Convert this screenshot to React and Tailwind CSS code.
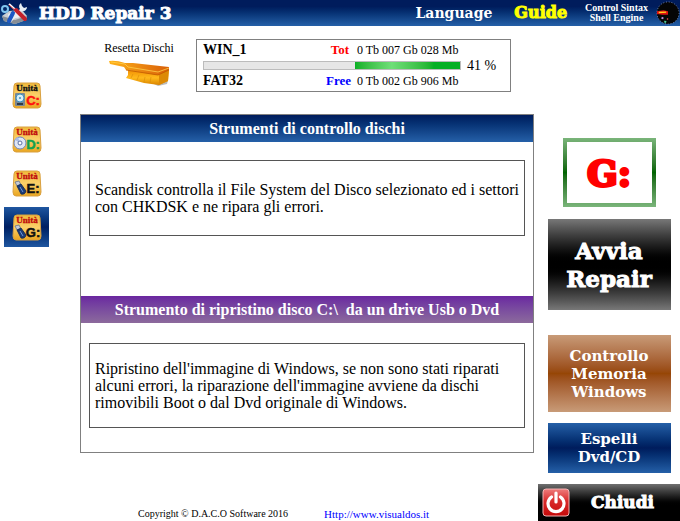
import React, { useState } from 'react'
import clsx from 'clsx'

const drives = [
  { letter: 'C:', color: '#ff1010', label: '#111111', kind: 'hdd' },
  { letter: 'D:', color: '#12a150', label: '#c00d0d', kind: 'dvd' },
  { letter: 'E:', color: '#111111', label: '#c00d0d', kind: 'usb' },
  { letter: 'G:', color: '#111111', label: '#c00d0d', kind: 'usb' },
]

const ToolsLogo = () => (
  <svg viewBox="0 0 28 24" className="h-6 w-7 shrink-0" aria-hidden="true">
    <path d="M2 15 L9 10 L22 9 L27 15 L26 19 L15 23 L4 20 Z" fill="#c9ced3" />
    <path d="M4 20 L15 23 L26 19 L27 15 L15 19 L2 15 Z" fill="#878e96" />
    <ellipse cx="15" cy="14" rx="7" ry="3" fill="#eef1f4" />
    <circle cx="5" cy="8" r="3" fill="none" stroke="#7fc4ee" strokeWidth="2" />
    <path d="M21 2 a4 4 0 0 0 -1 6 L9 19 l2 2 L22 10 a4 4 0 0 0 5 -4 l-3 1 l-2 -2 Z" fill="#e8eef4" />
    <path d="M13 12 L9 20" stroke="#1c57c4" strokeWidth="4" strokeLinecap="round" />
    <path d="M9 3 L19 12" stroke="#ffffff" strokeWidth="2" />
    <path d="M16 9 L25 18" stroke="#c3202b" strokeWidth="4" strokeLinecap="round" />
    <path d="M9 4 L18 12" stroke="#c3202b" strokeWidth="1" />
  </svg>
)

const ShellLogo = () => (
  <svg viewBox="0 0 26 26" className="size-6 shrink-0" aria-hidden="true">
    <circle cx="13" cy="13" r="12" fill="#050505" stroke="#8794b5" strokeWidth="1" strokeDasharray="1 2" />
    <path d="M1 11 L8 10 L13 11 L13 15 L7 15 L1 14 Z" fill="#e01010" />
    <path d="M3 12.5 L11 12" stroke="#ffd21c" strokeWidth="1.5" />
    <path d="M6 18 l2 1" stroke="#c58be0" strokeWidth="2" />
    <path d="M9 22 l2 1" stroke="#4fd39a" strokeWidth="2" />
    <path d="M12 19 l1 1" stroke="#e04848" strokeWidth="1.5" />
  </svg>
)

const Brush = () => (
  <svg viewBox="0 0 62 26" className="h-[26px] w-[62px]" aria-hidden="true">
    <defs>
      <linearGradient id="bristle" x1="0" y1="0" x2="0" y2="1">
        <stop offset="0%" stopColor="#f08a00" />
        <stop offset="55%" stopColor="#ffb91c" />
        <stop offset="100%" stopColor="#d98400" />
      </linearGradient>
      <linearGradient id="wood" x1="0" y1="0" x2="1" y2="0">
        <stop offset="0%" stopColor="#ffb31a" />
        <stop offset="100%" stopColor="#d95f08" />
      </linearGradient>
    </defs>
    <path d="M46 24 L60 20 L59 24 L50 26 Z" fill="#777777" opacity="0.5" />
    <path d="M20 10 L50 14 L61 9 L60 21 L51 25 L36 23 L18 18 L20 15 Z" fill="url(#bristle)" />
    <path d="M51 15 L61 9 L60 21 L51 25 Z" fill="#dd8a06" />
    <path d="M25 14 l-2 4 M31 15 l-2 5 M37 17 l-1 5 M43 17 l-1 6 M54 17 v5 M57 15 v5" stroke="#d88a08" strokeWidth="0.6" />
    <path d="M1 1 Q8 0 17 3 L25 3 L61 7 L61 10 L51 15 L49 15 L18 10 L16 7 L2 4 Z" fill="url(#wood)" />
    <path d="M18 10 L50 15 L61 10" fill="none" stroke="#c25a00" strokeWidth="0.8" />
    <path d="M3 2 L17 4 L20 7 L50 12 L61 8" fill="none" stroke="#ffd04a" strokeWidth="0.8" />
  </svg>
)

const DriveIcon = ({ drive }) => (
  <svg viewBox="0 0 30 27" className="h-[27px] w-[30px]" aria-hidden="true">
    <defs>
      <linearGradient id="plate" x1="0" y1="0" x2="0" y2="1">
        <stop offset="0%" stopColor="#f0b93a" />
        <stop offset="50%" stopColor="#fbd06a" />
        <stop offset="100%" stopColor="#e9a51f" />
      </linearGradient>
    </defs>
    <path d="M5 1 H25 Q28 1 28 4 L29 22 Q29 26 26 26 H4 Q1 26 1 22 L2 4 Q2 1 5 1 Z" fill="url(#plate)" stroke="#d9a040" />
    <text x="15" y="9" textAnchor="middle" fontSize="9" fontWeight="bold" fill={drive.label} stroke={drive.label} strokeWidth="0.3" fontFamily="'Liberation Serif', serif">Unità</text>
    {drive.kind === 'hdd' && (
      <g>
        <rect x="3" y="11" width="10" height="13" rx="1" fill="#7b8794" />
        <circle cx="8" cy="16" r="4" fill="#d9eef8" stroke="#3d91bd" />
        <circle cx="8" cy="16" r="1" fill="#3d91bd" />
        <path d="M5 22 h6" stroke="#2f3a45" strokeWidth="2" />
      </g>
    )}
    {drive.kind === 'dvd' && (
      <g>
        <circle cx="8" cy="17" r="6" fill="#dfe6f5" stroke="#6f86bd" />
        <path d="M8 17 L3 14 A6 6 0 0 1 6 11 Z" fill="#a9bce6" />
        <circle cx="8" cy="17" r="2" fill="#ffffff" stroke="#5b6fa3" />
      </g>
    )}
    {drive.kind === 'usb' && (
      <g>
        <path d="M3 12 L7 11 L9 15 L5 16 Z" fill="#c6ccd6" stroke="#65718a" strokeWidth="0.8" />
        <path d="M5 16 L9 14 L14 21 Q13 25 9 24 Z" fill="#1c3c78" stroke="#10264f" strokeWidth="0.8" />
        <path d="M8 17 L11 22" stroke="#6d96d8" />
      </g>
    )}
    <text x="21" y="23" textAnchor="middle" fontSize="13" fontWeight="900" fill={drive.color} stroke={drive.color} strokeWidth="0.5" fontFamily="'Liberation Sans', sans-serif">{drive.letter}</text>
  </svg>
)

const PowerIcon = () => (
  <svg viewBox="0 0 28 29" className="h-[29px] w-7 shrink-0" aria-hidden="true">
    <defs>
      <linearGradient id="power" x1="0" y1="0" x2="0" y2="1">
        <stop offset="0%" stopColor="#ee7d7d" />
        <stop offset="45%" stopColor="#d92a2a" />
        <stop offset="100%" stopColor="#c40a0a" />
      </linearGradient>
    </defs>
    <rect x="1" y="1" width="26" height="27" rx="3" fill="url(#power)" stroke="#f3b5b5" />
    <path d="M9.5 9 A8 8 0 1 0 18.5 9" fill="none" stroke="#ffffff" strokeWidth="3.2" strokeLinecap="round" />
    <path d="M14 5 V14" stroke="#ffffff" strokeWidth="3.2" strokeLinecap="round" />
  </svg>
)

const Header = () => (
  <header className="flex h-[26px] items-center bg-linear-to-b from-[#001c5c] from-25% to-[#2560a8] font-['DejaVu_Serif',serif] font-bold text-white">
    <ToolsLogo />
    <h1 className="ml-[11px] flex-1 text-[17px] leading-5 [-webkit-text-stroke:1px]">HDD Repair 3</h1>
    <button type="button" className="mr-[22px] text-[14px] leading-5">Language</button>
    <button type="button" className="mr-[18px] text-[16px] leading-5 text-[#ffff00] [-webkit-text-stroke:1px]">Guide</button>
    <button type="button" className="mr-2 font-['Liberation_Serif',serif] text-[10px] leading-[10px] font-bold">
      Control Sintax
      <br />
      Shell Engine
    </button>
    <ShellLogo />
  </header>
)

const DiskInfo = () => (
  <section className="flex h-[53px] w-[315px] flex-col justify-between border border-[#808080] px-[6px] py-[3px] text-[12px] leading-[14px]">
    <div className="flex items-center">
      <span className="flex-1 text-[14px] font-bold">WIN_1</span>
      <span className="mr-2 text-[13px] font-bold text-[#ff0000]">Tot</span>
      <span className="w-[147px]">0 Tb 007 Gb 028 Mb</span>
    </div>
    <div className="flex items-center">
      <div className="flex h-[9px] flex-1 justify-end border border-[#bcbcbc] bg-[#e6e6e6]">
        <div
          className="h-full bg-linear-to-r from-[#06b025] via-[#6fdf78] via-35% to-[#06b025] to-75%"
          style={{ width: '41%' }}
        />
      </div>
      <span className="w-[43px] pl-[6px] text-[14px]">41 %</span>
    </div>
    <div className="flex items-center">
      <span className="flex-1 text-[14px] font-bold">FAT32</span>
      <span className="mr-[6px] text-[13px] font-bold text-[#0000ff]">Free</span>
      <span className="w-[147px]">0 Tb 002 Gb 906 Mb</span>
    </div>
  </section>
)

const SectionTitle = ({ className, children }) => (
  <h2 className={clsx('flex h-[27px] items-center justify-center text-[16px] font-bold whitespace-pre text-white', className)}>
    {children}
  </h2>
)

const ActionButton = ({ className, children }) => (
  <button
    type="button"
    className={clsx("flex w-[123px] items-center justify-center bg-linear-to-b font-['DejaVu_Serif',serif] font-bold text-white", className)}
  >
    {children}
  </button>
)

export default function App() {
  const [selected, setSelected] = useState('G:')

  return (
    <div className="flex min-h-screen flex-col bg-white font-['Liberation_Serif',serif] text-black">
      <Header />
      <div className="flex flex-1">
        <nav className="flex w-20 shrink-0 flex-col gap-1 pt-[49px] pl-1">
          {drives.map((drive) => (
            <button
              key={drive.letter}
              type="button"
              aria-label={`Unità ${drive.letter}`}
              onClick={() => setSelected(drive.letter)}
              className={clsx(
                'flex h-10 w-[45px] items-center justify-center',
                selected === drive.letter && 'bg-linear-to-b from-[#1f56a0] via-[#001f62] to-[#1f56a0]'
              )}
            >
              <DriveIcon drive={drive} />
            </button>
          ))}
        </nav>

        <main className="flex flex-1 flex-col pt-[13px]">
          <div className="flex items-start gap-5 pl-[22px]">
            <button type="button" className="flex w-[74px] flex-col items-center gap-1 pt-px text-[12px] leading-4 whitespace-nowrap">
              Resetta Dischi
              <Brush />
            </button>
            <DiskInfo />
          </div>

          <div className="mt-[22px] border border-[#808080] pb-6">
            <SectionTitle className="bg-linear-to-b from-[#001c5c] to-[#2560a8]">Strumenti di controllo dischi</SectionTitle>
            <p className="mx-2 mt-[18px] flex h-[76px] items-center border border-[#555555] px-[5px] text-[16px] leading-[17px] whitespace-nowrap">
              Scandisk controlla il File System del Disco selezionato ed i settori
              <br />
              con CHKDSK e ne ripara gli errori.
            </p>
            <SectionTitle className="mt-[60px] bg-linear-to-b from-[#6a26a0] to-[#8c6a9c]">{'Strumento di ripristino disco C:\\  da un drive Usb o Dvd'}</SectionTitle>
            <p className="mx-2 mt-[20px] flex h-[85px] items-center border border-[#555555] px-[5px] text-[16px] leading-[17px] whitespace-nowrap">
              Ripristino dell'immagine di Windows, se non sono stati riparati
              <br />
              alcuni errori, la riparazione dell'immagine avviene da dischi
              <br />
              rimovibili Boot o dal Dvd originale di Windows.
            </p>
          </div>

          <footer className="mt-auto flex items-center gap-9 pl-[58px] leading-[14px]">
            <span className="text-[10px]">Copyright © D.A.C.O Software 2016</span>
            <a href="http://www.visualdos.it" className="text-[11px] text-[#0000ff]">Http://www.visualdos.it</a>
          </footer>
        </main>

        <aside className="flex w-[146px] shrink-0 flex-col items-center pt-28 pl-1">
          <div className="h-[69px] w-[93px] bg-linear-to-b from-[#7ab57a] via-[#006400] to-[#7ab57a] p-1">
            <output className="flex h-full items-center justify-center bg-white font-['DejaVu_Serif',serif] text-[36px] leading-10 font-bold text-[#ff0000] [-webkit-text-stroke:3px]">
              {selected}
            </output>
          </div>
          <ActionButton className="mt-3 h-[91px] from-[#787878] via-black to-[#787878] text-[23px] leading-7 [-webkit-text-stroke:1px]">
            Avvia
            <br />
            Repair
          </ActionButton>
          <ActionButton className="mt-[25px] h-[77px] from-[#c89b78] via-[#964605] to-[#c89b78] text-[15px] leading-[18px]">
            Controllo
            <br />
            Memoria
            <br />
            Windows
          </ActionButton>
          <ActionButton className="mt-[11px] h-[50px] from-[#2560a8] via-[#001c5c] to-[#2560a8] text-[15px] leading-[18px]">
            Espelli
            <br />
            Dvd/CD
          </ActionButton>
          <button
            type="button"
            className="mt-auto flex h-[37px] w-full items-center gap-[21px] bg-linear-to-b from-[#707070] to-black to-60% pl-1 font-['DejaVu_Serif',serif] text-[17px] font-bold text-white [-webkit-text-stroke:1px]"
          >
            <PowerIcon />
            Chiudi
          </button>
        </aside>
      </div>
    </div>
  )
}
